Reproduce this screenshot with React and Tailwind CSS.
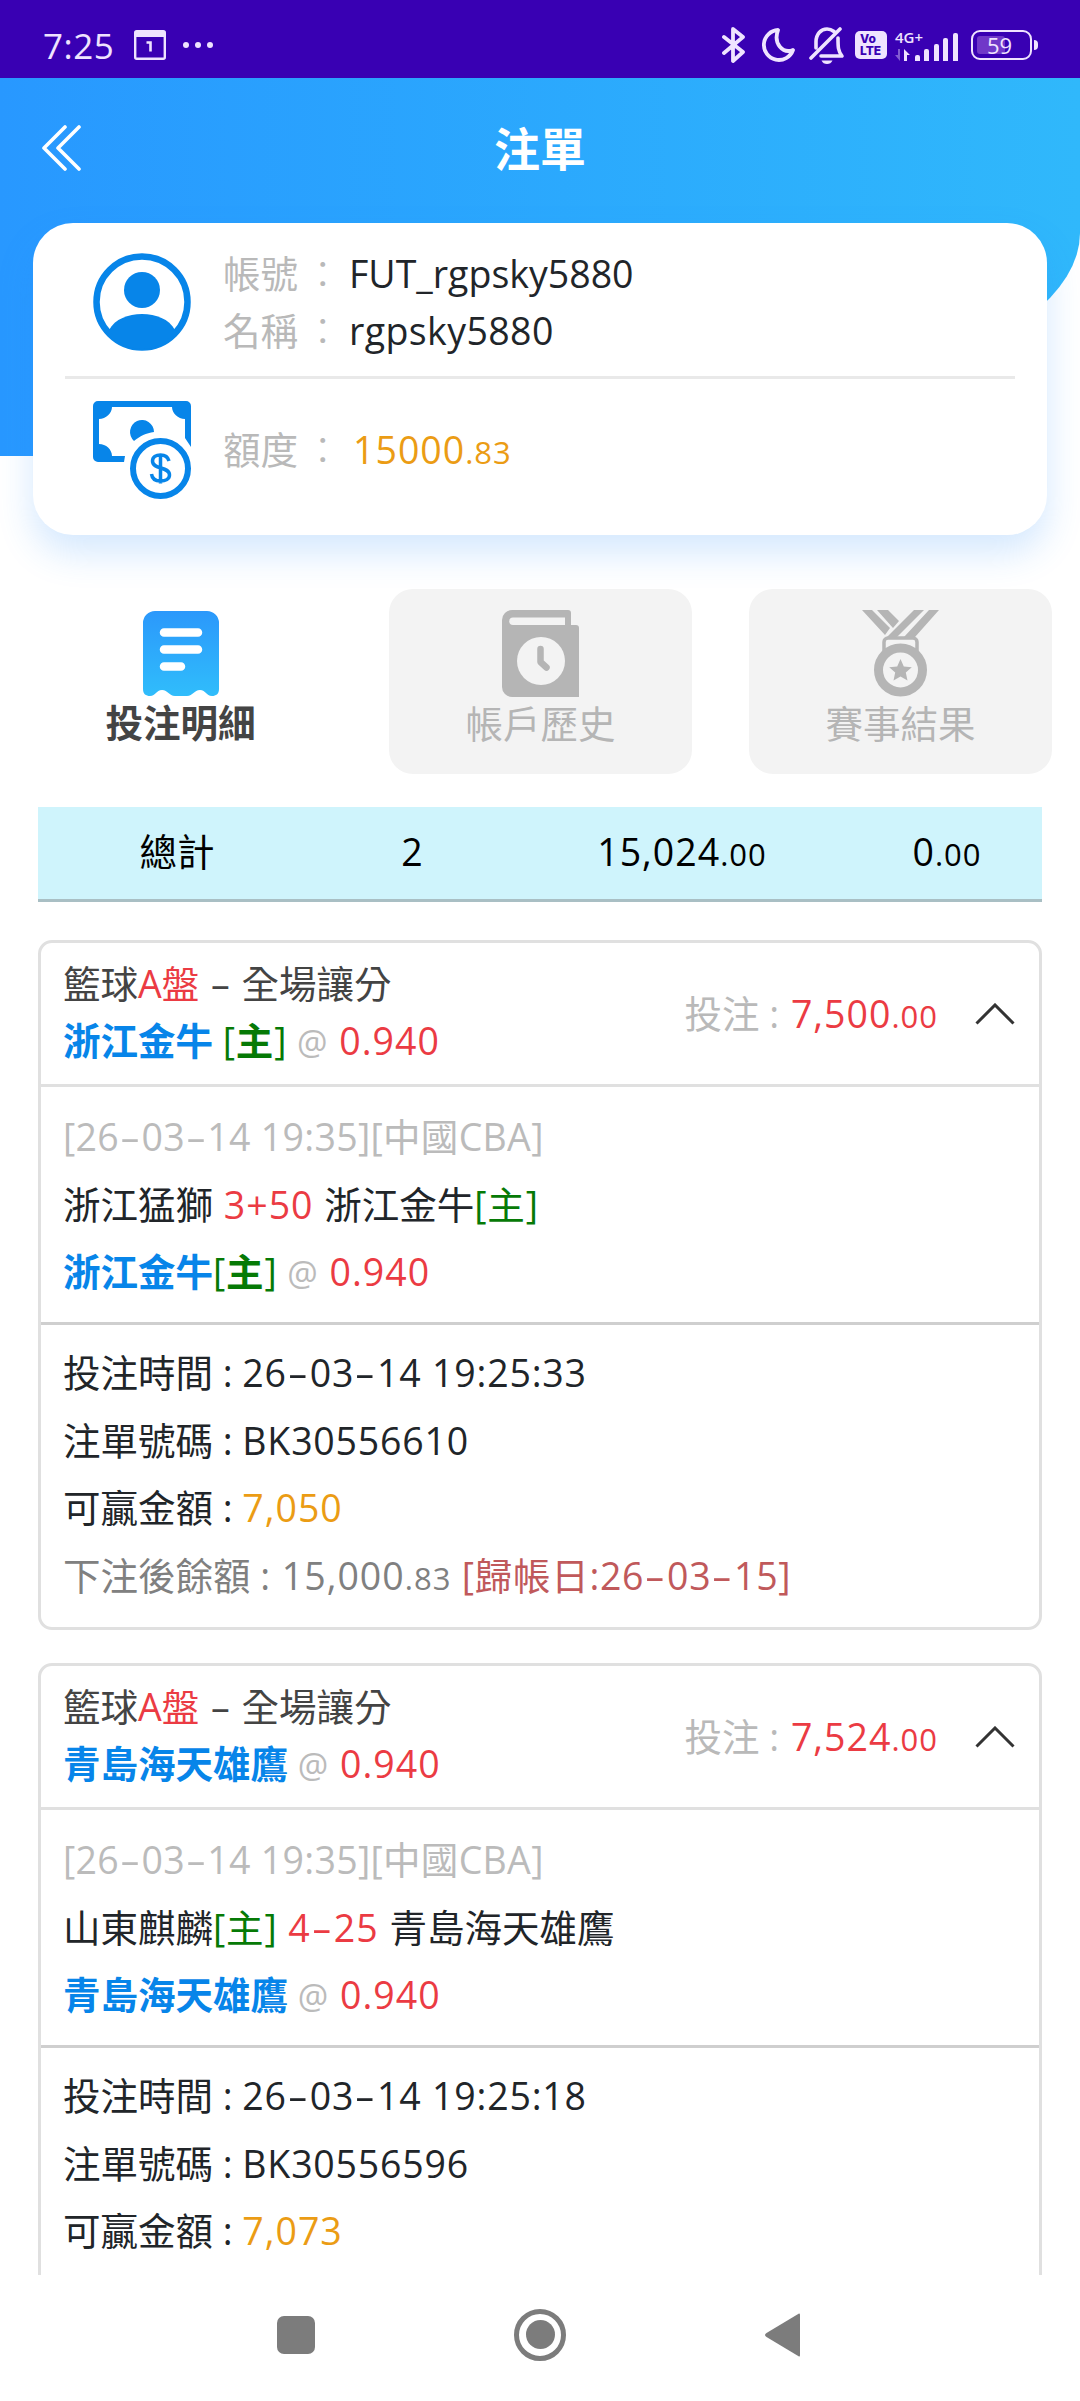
const bets = [
    {
        pick: '浙江金牛',
        pickHome: true,
        odds: '0.940',
        stake: '7,500',
        league: '[26-03-14 19:35][中國CBA]',
        left: '浙江猛獅',
        leftHome: false,
        handicap: '3+50',
        right: '浙江金牛',
        rightHome: true,
        time: '26-03-14 19:25:33',
        code: 'BK30556610',
        win: '7,050',
        balance: '15,000',
        settle: '[歸帳日:26-03-15]',
    },
    {
        pick: '青島海天雄鷹',
        pickHome: false,
        odds: '0.940',
        stake: '7,524',
        league: '[26-03-14 19:35][中國CBA]',
        left: '山東麒麟',
        leftHome: true,
        handicap: '4-25',
        right: '青島海天雄鷹',
        rightHome: false,
        time: '26-03-14 19:25:18',
        code: 'BK30556596',
        win: '7,073',
    },
]

function StatusBar() {
    return (
        <div className="flex h-[78px] shrink-0 items-center bg-[#3900b3] pt-3 pl-[43px] pr-[42px] text-[#efe3ff]">
            <span className="w-[91px] text-[35px] leading-none tracking-[0.5px]">7:25</span>
            <svg className="h-[30px] w-8" viewBox="0 0 32 30">
                <rect x="1.2" y="1.2" width="29.6" height="27.6" rx="1.5" fill="none" stroke="currentColor" strokeWidth="2.4" />
                <rect x="1" y="1" width="30" height="6" fill="currentColor" />
                <path d="M12.5 12.5h4v9" fill="none" stroke="currentColor" strokeWidth="2.6" />
            </svg>
            <div className="ml-[17px] flex gap-[6px]">
                <i className="size-[6px] rounded-full bg-[#efe3ff]" />
                <i className="size-[6px] rounded-full bg-[#efe3ff]" />
                <i className="size-[6px] rounded-full bg-[#efe3ff]" />
            </div>

            <div className="ml-auto flex items-center">
                <svg className="h-[38px] w-6" viewBox="0 0 24 38" fill="none" stroke="currentColor" strokeWidth="3.8" strokeLinejoin="round" strokeLinecap="round">
                    <path d="M2 11l19 15-10 9V3l10 8L2 27" />
                </svg>
                <svg className="ml-[15px] h-9 w-[34px]" viewBox="0 0 34 36" fill="none" stroke="currentColor" strokeWidth="3.8" strokeLinejoin="round">
                    <path d="M17 3A15 15 0 1 0 32 23C22 27 12 17 17 3z" />
                </svg>
                <svg className="ml-[14px] h-[38px] w-9" viewBox="0 0 36 38" fill="none" stroke="currentColor" strokeWidth="3.6" strokeLinejoin="round" strokeLinecap="round">
                    <path d="M2 32L31 3M7 22v-6C7 8 12 3 18 3c3 0 5 1 7 2.500" />
                    <path d="M29 12c0 9 0 13 4 18H12" />
                    <path d="M12.500 34.500h11c-1 2.500-3 3.500-5.500 3.500s-4.500-1-5.500-3.500z" fill="currentColor" stroke="none" />
                </svg>
                <div className="ml-[10px] flex h-7 w-8 flex-col justify-center rounded-[5px] bg-[#efe3ff] pl-[5px] font-[Inter] text-[12px] leading-[12px] font-extrabold text-[#3900b3]">
                    <span>Vo</span>
                    <span>LTE</span>
                </div>
                <div className="ml-[8px] flex h-8 w-[63px] items-end justify-between">
                    <div className="flex flex-col">
                        <span className="w-3 text-[15px] leading-[16px] font-semibold whitespace-nowrap">4G+</span>
                        <svg className="mt-1 h-[12px] w-[15px]" viewBox="0 0 15 12">
                            <path d="M5 0v12L0 6h3V0z" fill="currentColor" opacity=".4" />
                            <path d="M9 12V0l6 6h-3v6z" fill="currentColor" />
                        </svg>
                    </div>
                    <i className="h-[6px] w-[5px] rounded-t-[2px] bg-[#efe3ff]" />
                    <i className="h-3 w-[5px] rounded-t-[2px] bg-[#efe3ff]" />
                    <i className="h-[17px] w-[5px] rounded-t-[2px] bg-[#efe3ff]" />
                    <i className="h-[23px] w-[5px] rounded-t-[2px] bg-[#efe3ff]" />
                    <i className="h-[28px] w-[5px] rounded-t-[2px] bg-[#efe3ff]" />
                </div>
                <div className="ml-[13px] flex h-[30px] w-[61px] rounded-[9px] border-[2.5px] border-[#efe3ff] p-[4px]">
                    <div className="flex w-7 rounded-[3px] bg-[#7038c8]">
                        <span className="pl-[10px] text-[22px] leading-[18px]">59</span>
                    </div>
                </div>
                <i className="ml-[2px] h-[10px] w-[4px] rounded-r bg-[#efe3ff]" />
            </div>
        </div>
    )
}

function UserIcon() {
    return (
        <svg className="size-[98px]" viewBox="0 0 98 98" fill="#0785e9">
            <circle cx="49" cy="49" r="45.500" fill="none" stroke="#0785e9" strokeWidth="6.500" />
            <circle cx="49" cy="37" r="18" />
            <path d="M16 77C22 66 35 61 49 61s27 5 33 16C74 90 62 96 49 96S24 90 16 77z" />
        </svg>
    )
}

function MoneyIcon() {
    return (
        <svg className="size-[98px]" viewBox="0 0 98 98">
            <path d="M5 0h88a5 5 0 0 1 5 5v41L92 37V18c-7 0-13-6-13-12H19c0 6-6 12-13 12v25c7 0 13 5.500 13 12h13l-1 6H5a5 5 0 0 1-5-5V5a5 5 0 0 1 5-5z" fill="#0785e9" />
            <path d="M41 40a12 12 0 1 1 20-9c-8 1-14 4-20 9z" fill="#0785e9" />
            <circle cx="67.500" cy="67.500" r="27.500" fill="#fff" stroke="#0785e9" strokeWidth="6" />
            <path d="M76 60c-1-4-4-6-8.500-6s-8 2-8 6c0 9 17 5 17 14 0 4-4 6-9 6-5.500 0-8.500-3-9-7M67.500 52.500v30" fill="none" stroke="#0785e9" strokeWidth="3.500" />
        </svg>
    )
}

function ReceiptIcon() {
    return (
        <svg className="h-[86px] w-[76px]" viewBox="0 0 76 86">
            <defs>
                <linearGradient id="receipt" x1="0" y1="0" x2="0" y2="1">
                    <stop offset="0" stopColor="#2b98fb" />
                    <stop offset="1" stopColor="#30bdfb" />
                </linearGradient>
            </defs>
            <path d="M12 1h52a12 12 0 0 1 12 12v66c0 5-3 7-7 7-6 0-6-6-12-6s-7 6-13 6h-12c-6 0-7-6-13-6s-6 6-12 6c-4 0-7-2-7-7V13A12 12 0 0 1 12 1z" fill="url(#receipt)" />
            <path d="M21 22.500h34M21 39.500h34M21 56.500h17" stroke="#fff" strokeWidth="8.500" strokeLinecap="round" />
        </svg>
    )
}

function HistoryIcon() {
    return (
        <svg className="h-[87px] w-[77px]" viewBox="0 0 77 87">
            <path d="M10 0h56a3 3 0 0 1 3 3v12h5a3 3 0 0 1 3 3v69H10A10 10 0 0 1 0 77V10A10 10 0 0 1 10 0z" fill="#b5b5b5" />
            <path d="M11 7.500h52v7.500H11a3.750 3.750 0 0 1 0-7.500z" fill="#f3f3f3" />
            <circle cx="39" cy="51" r="24" fill="#f3f3f3" />
            <path d="M38.500 39v13l6 5.500" fill="none" stroke="#b5b5b5" strokeWidth="6.500" strokeLinecap="round" strokeLinejoin="round" />
        </svg>
    )
}

function MedalIcon() {
    return (
        <svg className="h-[87px] w-[77px]" viewBox="0 0 77 87">
            <path d="M0 0h10l18 18-5 7z M15 0h11l11 11-6 7z" fill="#b5b5b5" />
            <path d="M52 0h10L35 27H25z M67 0h10L53 27H42z" fill="#b5b5b5" />
            <path d="M22 42V32a4 4 0 0 1 4-4h25a4 4 0 0 1 4 4v10" fill="none" stroke="#b5b5b5" strokeWidth="3.500" />
            <circle cx="38.500" cy="60" r="22" fill="#f3f3f3" stroke="#b5b5b5" strokeWidth="9" />
            <path d="M38.500 49l3.300 7.400 8 .8-6 5.400 1.700 8-7-4.100-7 4.100 1.700-8-6-5.400 8-.8z" fill="#b5b5b5" />
        </svg>
    )
}

// Hyphens are drawn as wide as a digit
function Num({ children }) {
    return children.split('-').map((part, i) => (
        <span key={i}>
            {i > 0 && <span className="mx-[5px] inline-block scale-x-170 leading-none">-</span>}
            {part}
        </span>
    ))
}

function Cents({ children }) {
    return <span className="text-[31px] leading-none tracking-[1px]">{children}</span>
}

function InfoRow({ label, children }) {
    return (
        <div className="flex h-[57px] items-center">
            <span className="w-[81px] text-[#b9b9b9]">{label}</span>
            <span className="w-[45px] font-light text-[#b9b9b9]">：</span>
            {children}
        </div>
    )
}

function AccountCard() {
    return (
        <div className="mx-[33px] h-[312px] rounded-[40px] bg-white px-8 pt-[22px] shadow-[0_18px_36px_rgba(40,140,250,0.2)]">
            <div className="flex h-[134px] items-start border-b-[3px] border-[#e9e9e9] pl-7">
                <div className="pt-[8px]">
                    <UserIcon />
                </div>
                <div className="ml-8">
                    <InfoRow label="帳號">
                        <span className="text-[#212529]">FUT_rgpsky5880</span>
                    </InfoRow>
                    <InfoRow label="名稱">
                        <span className="text-[#212529] tracking-[0.4px]">rgpsky5880</span>
                    </InfoRow>
                </div>
            </div>
            <div className="flex items-center pt-[22px] pl-7">
                <MoneyIcon />
                <div className="ml-8">
                    <InfoRow label="額度">
                        <span className="pl-1 text-[#eb9c14] tracking-[1px]">
                            15000<Cents>.83</Cents>
                        </span>
                    </InfoRow>
                </div>
            </div>
        </div>
    )
}

function Header() {
    return (
        <div className="h-[378px] shrink-0 rounded-br-[692px_223px] bg-linear-to-r from-[#2898ff] to-[#30b8fb]">
            <div className="grid h-[145px] grid-cols-3 items-center pb-[5px]">
                <svg className="ml-[41px] h-[46px] w-[40px]" viewBox="0 0 40 46" fill="none" stroke="#fff" strokeWidth="3.600" strokeLinecap="round" strokeLinejoin="round">
                    <path d="M24 2L3 23l21 21M38 2L17 23l21 21" />
                </svg>
                <h1 className="text-center text-[46px] leading-none font-bold text-white">注單</h1>
            </div>
            <AccountCard />
        </div>
    )
}

function Tab({ icon, label, active }) {
    return (
        <div className={active ? 'flex w-[303px] flex-col items-center rounded-[24px] pt-[21px] font-bold text-[#444]' : 'flex w-[303px] flex-col items-center rounded-[24px] bg-[#f3f3f3] pt-[21px] text-[#b5b5b5]'}>
            {icon}
            <span className="mt-[6px] leading-[42px]">{label}</span>
        </div>
    )
}

function Home({ bold }) {
    return (
        <span className="tracking-[0.8px] text-[#067a06]">
            [<span className={bold ? 'font-bold' : ''}>主</span>]
        </span>
    )
}

function Odds({ value }) {
    return (
        <>
            {' '}
            <span className="text-[34px] leading-none text-[#bbb]">@</span>{' '}
            <span className="pl-[2px] text-[#eb3b43] tracking-[1px]">{value}</span>
        </>
    )
}

function BetCard({ bet }) {
    return (
        <div className="mx-[38px] mb-[33px] shrink-0 rounded-[14px] border-[3px] border-[#e0e0e0]">
            <div className="flex h-[144px] justify-between border-b-[3px] border-[#e0e0e0] pt-[12px] pr-[24px] pl-[22px] leading-[57px]">
                <div>
                    <p className="text-[#444]">
                        籃球<span className="text-[#eb3b43]">A盤</span>
                        <span className="px-[2px]"> – </span>全場讓分
                    </p>
                    <p>
                        <span className="font-bold text-[#0785e9]">{bet.pick}</span>
                        {bet.pickHome && ' '}
                        {bet.pickHome && <Home bold />}
                        <Odds value={bet.odds} />
                    </p>
                </div>
                <div className="flex items-center pb-3">
                    <span className="pr-[2px] whitespace-pre text-[#b9b9b9]">投注 : </span>
                    <span className="text-[#eb3b43] tracking-[1px]">
                        {bet.stake}
                        <Cents>.00</Cents>
                    </span>
                    <svg className="ml-[37px] h-[22px] w-10" viewBox="0 0 40 22" fill="none" stroke="#333" strokeWidth="3">
                        <path d="M1.500 20.500L20 2l18.500 18.500" />
                    </svg>
                </div>
            </div>

            <div className="h-[238px] border-b-[3px] border-[#cfcfcf] px-[22px] pt-[16px] leading-[67.5px]">
                <p className="text-[#bbb] tracking-[0.3px]"><Num>{bet.league}</Num></p>
                <p className="text-[#212529]">
                    {bet.left}
                    {bet.leftHome && <Home />}
                    <span className="text-[#eb3b43] tracking-[1px]"> <Num>{bet.handicap}</Num> </span>
                    {bet.right}
                    {bet.rightHome && <Home />}
                </p>
                <p>
                    <span className="font-bold text-[#0785e9]">{bet.pick}</span>
                    {bet.pickHome && <Home bold />}
                    <Odds value={bet.odds} />
                </p>
            </div>

            <div className="h-[302px] px-[22px] pt-[14px] leading-[67.5px] text-[#212529]">
                <p>投注時間 : <span className="tracking-[0.8px]"><Num>{bet.time}</Num></span></p>
                <p>注單號碼 : <span className="tracking-[0.8px]">{bet.code}</span></p>
                <p>可贏金額 : <span className="text-[#eb9c14] tracking-[1px]">{bet.win}</span></p>
                {bet.balance && (
                    <p className="text-[#808080]">
                        下注後餘額 : <span className="pl-[2px] tracking-[1px]">{bet.balance}</span>
                        <Cents>.83</Cents>
                        <span className="tracking-[0.7px] text-[#c0595b]"> <Num>{bet.settle}</Num></span>
                    </p>
                )}
            </div>
        </div>
    )
}

function NavBar() {
    return (
        <div className="flex h-[126px] items-center bg-white pb-[7px] pl-[277px]">
            <div className="size-[38px] rounded-[7px] bg-[#7c7c7c]" />
            <div className="ml-[199px] flex size-[52px] items-center justify-center rounded-full border-[5px] border-[#7c7c7c]">
                <div className="size-[29px] rounded-full bg-[#7c7c7c]" />
            </div>
            <svg className="ml-[199px] h-[44px] w-[35px]" viewBox="0 0 35 44" fill="#7c7c7c">
                <path d="M34 .500Q35 0 35 2v40q0 2-1 1.500L1.500 24q-3-2 0-4z" />
            </svg>
        </div>
    )
}

export default function App() {
    return (
        <div className="w-[1080px] bg-white font-['Open_Sans','Noto_Sans_CJK_TC',sans-serif] text-[37.5px] leading-none">
            <div className="flex h-[2275px] flex-col overflow-hidden">
                <StatusBar />
                <Header />
                <div className="mt-[133px] ml-[29px] flex h-[185px] shrink-0 gap-[57px]">
                    <Tab active icon={<ReceiptIcon />} label="投注明細" />
                    <Tab icon={<HistoryIcon />} label="帳戶歷史" />
                    <Tab icon={<MedalIcon />} label="賽事結果" />
                </div>

                {/* Totals */}
                <div className="mx-[38px] mt-[33px] mb-[38px] grid h-[95px] shrink-0 grid-cols-[278px_192px_348px_182px] items-center border-b-[3px] border-[#a9bfc4] bg-[#cff4fc] pb-[2px] text-center text-black">
                    <span>總計</span>
                    <span>2</span>
                    <span className="tracking-[1px]">15,024<Cents>.00</Cents></span>
                    <span className="tracking-[1px]">0<Cents>.00</Cents></span>
                </div>

                {bets.map((bet) => (
                    <BetCard key={bet.code} bet={bet} />
                ))}
            </div>
            <NavBar />
        </div>
    )
}
